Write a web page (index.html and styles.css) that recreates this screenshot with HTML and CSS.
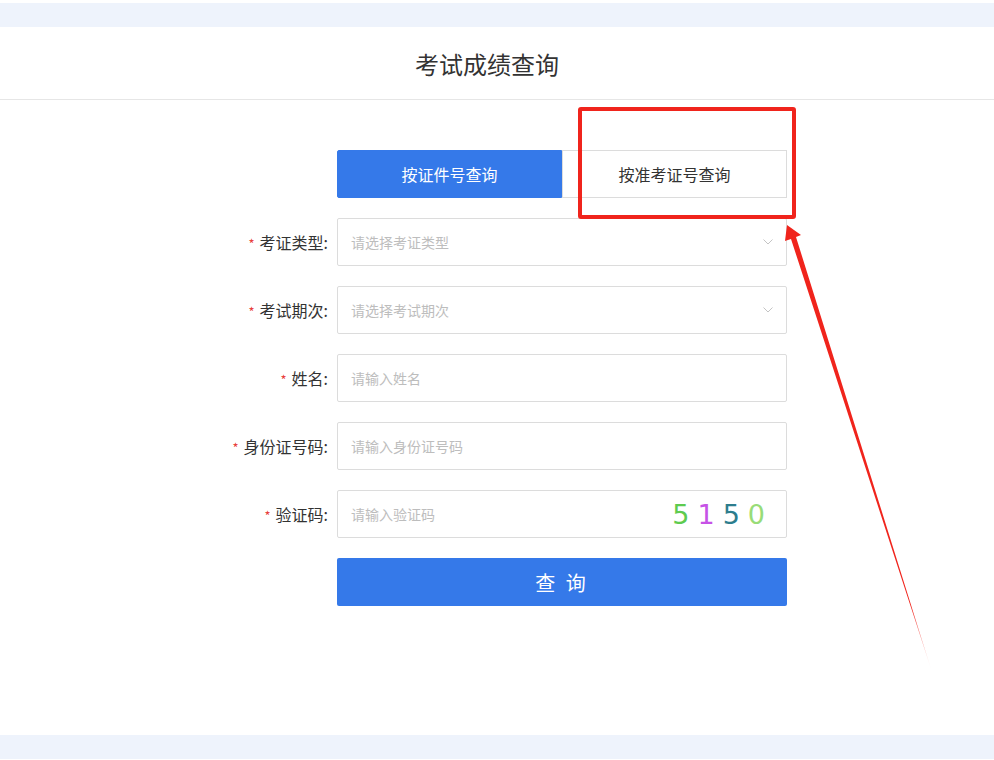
FILE: index.html
```html
<!DOCTYPE html>
<html lang="zh-CN">

<head>
  <meta charset="UTF-8">
  <meta name="viewport" content="width=device-width, initial-scale=1.0">
  <title>考试成绩查询</title>
  <link rel="stylesheet" href="styles.css">
</head>

<body>
  <div class="page">
    <div class="band"></div>
    <header>
      <h1>考试成绩查询</h1>
    </header>
    <main>
      <div class="query">
        <div class="tabs">
          <a href="#" class="tab active">按证件号查询</a>
          <a href="#" class="tab">按准考证号查询</a>
        </div>
        <div class="row">
          <label><i>*</i>考证类型:</label>
          <div class="field select">
            <span class="ph">请选择考证类型</span>
            <svg class="chev" width="10" height="6" viewBox="0 0 10 6"><path d="M0.5 0.5 L5 5 L9.5 0.5" fill="none" stroke="#c4c4c4" stroke-width="1"/></svg>
          </div>
        </div>
        <div class="row">
          <label><i>*</i>考试期次:</label>
          <div class="field select">
            <span class="ph">请选择考试期次</span>
            <svg class="chev" width="10" height="6" viewBox="0 0 10 6"><path d="M0.5 0.5 L5 5 L9.5 0.5" fill="none" stroke="#c4c4c4" stroke-width="1"/></svg>
          </div>
        </div>
        <div class="row">
          <label><i>*</i>姓名:</label>
          <div class="field"><span class="ph">请输入姓名</span></div>
        </div>
        <div class="row">
          <label><i>*</i>身份证号码:</label>
          <div class="field"><span class="ph">请输入身份证号码</span></div>
        </div>
        <div class="row">
          <label><i>*</i>验证码:</label>
          <div class="field">
            <span class="ph">请输入验证码</span>
            <span class="captcha"><b class="c1">5</b><b class="c2">1</b><b class="c3">5</b><b class="c4">0</b></span>
          </div>
        </div>
        <div class="row">
          <span></span>
          <a href="#" class="btn">查 询</a>
        </div>
      </div>
    </main>
    <div class="band"></div>

    <!-- marcacao vermelha por cima da tela -->
    <div class="mark-box"></div>
    <svg class="mark-arrow" width="994" height="760" viewBox="0 0 994 760">
      <defs>
        <linearGradient id="fade" x1="787" y1="225" x2="932" y2="672" gradientUnits="userSpaceOnUse">
          <stop offset="0" stop-color="#f0241c"/>
          <stop offset="0.85" stop-color="#f0241c"/>
          <stop offset="1" stop-color="#f0241c" stop-opacity="0"/>
        </linearGradient>
      </defs>
      <polygon points="787,225 801,235 796,237 932,672 791,239 785,241" fill="url(#fade)"/>
    </svg>
  </div>
</body>

</html>
```

FILE: styles.css
```css
body,
h1,
p {
  margin: 0;
  padding: 0;
}

body {
  font-family: "Noto Sans CJK SC", "Noto Sans", sans-serif;
  background: #fff;
  color: #333;
}

.page {
  position: relative;
  width: 994px;
  height: 760px;
  overflow: hidden;
  padding-top: 3px;
  box-sizing: border-box;
}

.band {
  height: 24px;
  background: #eef3fc;
}

header {
  height: 72px;
  border-bottom: 1px solid #e6e6e6;
  display: flex;
  align-items: center;
  justify-content: center;
  padding-right: 20px;
}

h1 {
  font-size: 24px;
  font-weight: normal;
  color: #333;
}

main {
  height: 635px;
  box-sizing: border-box;
  padding-top: 50px;
}

.query {
  width: 580px;
  margin: 0 auto;
}

.tabs {
  display: flex;
  margin-left: 130px;
  margin-bottom: 20px;
}

.tab {
  flex: 1;
  height: 48px;
  display: flex;
  align-items: center;
  justify-content: center;
  text-decoration: none;
  font-size: 16px;
  color: #333;
  border: 1px solid #dcdcdc;
  box-sizing: border-box;
}

.tab.active {
  background: #3579e9;
  border-color: #3579e9;
  color: #fff;
  border-radius: 2px 0 0 2px;
}

.row {
  display: grid;
  grid-template-columns: 130px 450px;
  align-items: center;
  margin-bottom: 20px;
}

.row label {
  text-align: right;
  padding-right: 9px;
  font-size: 16px;
  color: #333;
}

.row label i {
  font-style: normal;
  color: #e8403a;
  font-size: 13px;
  margin-right: 5px;
}

.field {
  height: 48px;
  box-sizing: border-box;
  border: 1px solid #dcdcdc;
  border-radius: 2px;
  display: flex;
  align-items: center;
  padding: 0 13px;
  position: relative;
}

.ph {
  font-size: 14px;
  color: #bdbdbd;
  flex: 1;
}

.chev {
  margin-right: 0;
}

.captcha {
  display: flex;
  gap: 8px;
  font-family: "DejaVu Sans", sans-serif;
  font-size: 27px;
  margin-right: 8px;
}

.captcha b {
  font-weight: normal;
}

.c1 { color: #5ecb4f; }
.c2 { color: #c652e6; }
.c3 { color: #2d7d8d; }
.c4 { color: #98dc78; }

.btn {
  height: 48px;
  background: #3579e9;
  border-radius: 2px;
  color: #fff;
  text-decoration: none;
  font-size: 20px;
  display: flex;
  align-items: center;
  justify-content: center;
  letter-spacing: 3px;
}

.mark-box {
  position: absolute;
  left: 578px;
  top: 107px;
  width: 218px;
  height: 112px;
  box-sizing: border-box;
  border: 4px solid #f0241c;
  border-radius: 3px;
}

.mark-arrow {
  position: absolute;
  left: 0;
  top: 0;
}
```
